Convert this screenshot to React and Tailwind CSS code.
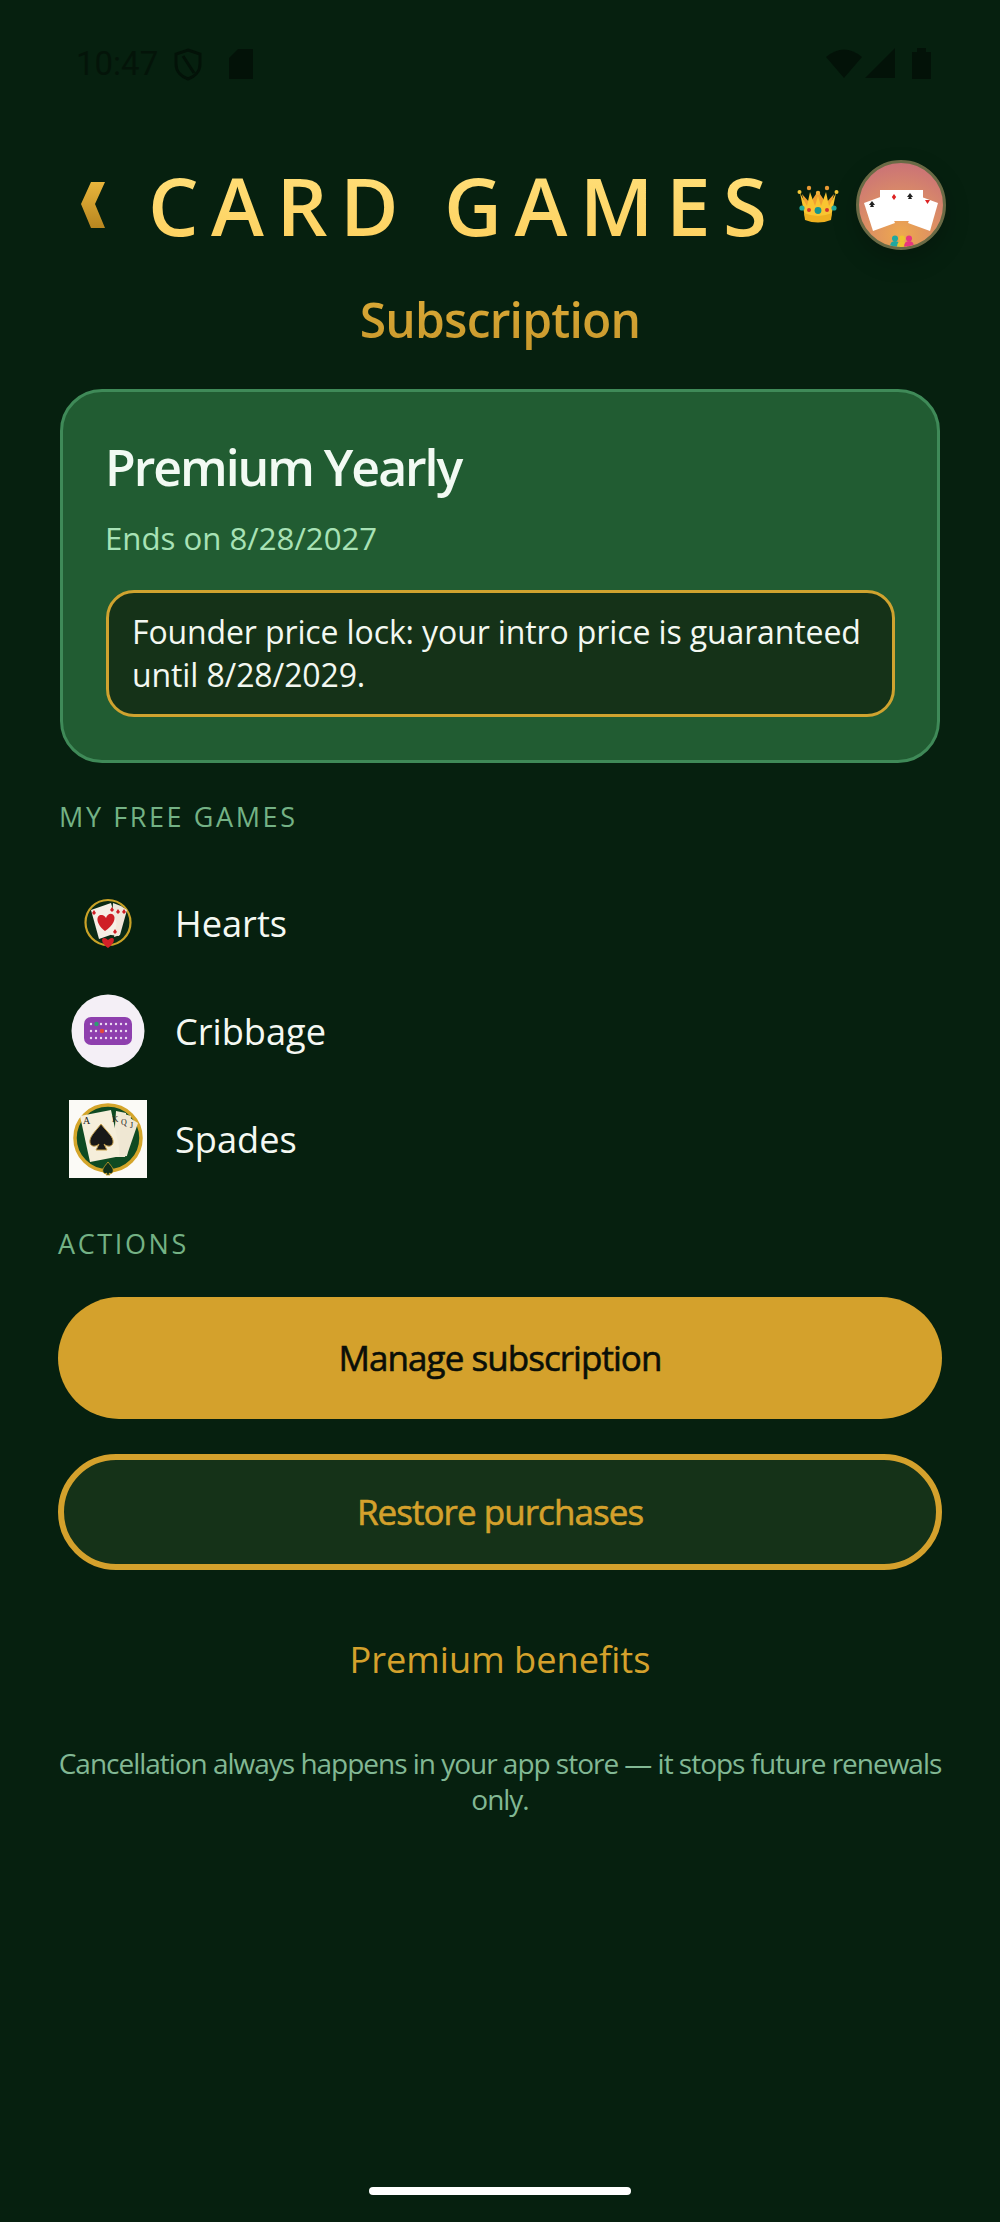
import React from "react";

function Chevron() {
  return (
    <svg width="26" height="48" viewBox="0 0 26 48" className="block shrink-0">
      <defs>
        <linearGradient id="chev" x1="0" y1="0" x2="0" y2="1">
          <stop offset="0" stopColor="#e8b53c" />
          <stop offset="1" stopColor="#b8861f" />
        </linearGradient>
      </defs>
      <polygon points="25,1 11,1 1,23 11,47 25,47 15,23" fill="url(#chev)" />
    </svg>
  );
}

function Crown() {
  return (
    <svg width="42" height="42" viewBox="0 0 42 42" className="block shrink-0">
      <path d="M5 10 L10 30 H32 L37 10 L29 19 L21 7 L13 19 Z" fill="#f0a030" />
      <path d="M3 9 L8 33 Q21 38 34 33 L39 9 L32 22 L29 8 L24 22 L21 12 L18 22 L13 8 L10 22 Z" fill="#f9c531" />
      <path d="M7 29 Q21 35 35 29 L34 36 Q21 41 8 36 Z" fill="#eeb020" />
      <circle cx="2.5" cy="8" r="2" fill="#f5c838" />
      <circle cx="12" cy="4" r="2.2" fill="#e99a35" />
      <circle cx="21" cy="9" r="2.2" fill="#f2b13a" />
      <circle cx="30" cy="4" r="2.2" fill="#e99a35" />
      <circle cx="39.5" cy="8" r="2" fill="#f5c838" />
      <circle cx="5" cy="24" r="2.6" fill="#23a79b" />
      <circle cx="12" cy="26" r="2" fill="#d6352d" />
      <circle cx="21" cy="26.5" r="3.4" fill="#14958f" />
      <circle cx="30" cy="26" r="2" fill="#d6352d" />
      <circle cx="37" cy="24" r="2.6" fill="#23a79b" />
    </svg>
  );
}

function Avatar() {
  return (
    <div className="w-[90px] h-[90px] shrink-0 rounded-full border-[3px] border-[#6a6a45] overflow-hidden shadow-[0_10px_24px_rgba(0,0,0,0.22)] bg-[radial-gradient(circle_at_50%_85%,#eea84e_0%,#d98a68_50%,#c56a7c_100%)]">
      <svg width="84" height="84" viewBox="0 0 84 84" className="block">
        <polygon points="5,40 24,33 36,60 14,68" fill="#fff" />
        <polygon points="79,40 60,33 49,60 71,68" fill="#fff" />
        <polygon points="21,27 64,27 64,58 21,58" fill="#fff" />
        <path d="M13 38 l3 4 h-2 l1 2 h-4 l1 -2 h-2 z" fill="#222" />
        <path d="M35 31 l2.200 3 l-2.200 3 l-2.200 -3 z" fill="#d22" />
        <path d="M51 30 l3 4 h-2 l1 2 h-4 l1 -2 h-2 z" fill="#222" />
        <path d="M66 37 h5 l-2.500 4 z" fill="#d22" />
        <circle cx="36" cy="75.500" r="3" fill="#1fa8a0" />
        <path d="M31 84 Q31 78 36 78 Q41 78 41 84 Z" fill="#1fa8a0" />
        <circle cx="43" cy="75.500" r="3" fill="#eec22f" />
        <path d="M38 84 Q38 78 43 78 Q48 78 48 84 Z" fill="#eec22f" />
        <circle cx="50" cy="75.500" r="3" fill="#e8357f" />
        <path d="M45 84 Q45 78 50 78 Q55 78 55 84 Z" fill="#e8357f" />
      </svg>
    </div>
  );
}

function HeartsIcon() {
  return (
    <svg width="50" height="52" viewBox="0 0 50 52" className="block">
      <circle cx="25" cy="25.5" r="22.5" fill="#0a2a15" stroke="#c9a227" strokeWidth="2.2" />
      <polygon points="30,6 38,9 43,13 36,39 28,38" fill="#efe7dc" />
      <polygon points="8,13 28,6 36,35 16,42" fill="#f6efe6" />
      <path d="M37 9 L44 13 L37 38 L31 40 Z" fill="#f2e6da" />
      <path d="M22 34 C11 25 14 17 19 18 C22 18.5 23 21 23 21 C24 18 27 15.500 30 17.500 C34 21 30 29 22 34 Z" fill="#cf1f26" />
      <path d="M11 13 l2 3 l-2 2 l-2 -2 z" fill="#cf1f26" />
      <path d="M29 10 l2 3 l-2 2 l-2 -2 z M32 32 l2 3 l-2 2 l-2 -2 z" fill="#cf1f26" />
      <path d="M35 12 l2 3 l-2 2 l-2 -2 z M41 12 l2 3 l-2 2 l-2 -2 z" fill="#cf1f26" />
      <path d="M25 51 C18 46 18 41 21 41 C23 41 25 43 25 43 C25 43 27 41 29 41 C32 41 32 46 25 51 Z" fill="#d32028" />
    </svg>
  );
}

function CribbageIcon() {
  const rows = [0, 1, 2];
  const cols = [0, 1, 2, 3, 4, 5, 6, 7];
  return (
    <svg width="74" height="74" viewBox="0 0 74 74" className="block">
      <circle cx="37" cy="37" r="36.500" fill="#f4eff6" />
      <rect x="13" y="23" width="48" height="28" rx="7" fill="#8e3fae" />
      {rows.map((r) =>
        cols.map((c) => (
          <circle key={r + "-" + c} cx={20 + c * 5} cy={30 + r * 7} r="1.200" fill="#ecdcf2" />
        ))
      )}
      <circle cx="25.500" cy="30" r="2.200" fill="#2e9e72" />
      <circle cx="31" cy="37" r="2.200" fill="#e5483a" />
    </svg>
  );
}

function SpadesIcon() {
  return (
    <svg width="78" height="78" viewBox="0 0 78 78" className="block">
      <rect width="78" height="78" fill="#fbfaf6" />
      <circle cx="39" cy="38" r="33" fill="#0e4a22" stroke="#d4a52a" strokeWidth="3.500" />
      <polygon points="47,11 57,13 56,57 44,57" fill="#f1ead6" />
      <polygon points="11,16 42,10 52,56 21,62" fill="#f5eeda" />
      <polygon points="52,13 62,16 58,56 50,57" fill="#efe7d3" />
      <polygon points="61,18 69,23 58,55 53,56" fill="#efe7d3" />
      <path d="M32 24 C25 33 20 37 21 43 C22 47 27 47 30 44 L27 50 H38 L35 44 C38 47 43 47 44 43 C45 37 39 33 32 24 Z" fill="#181818" stroke="#c7a04a" strokeWidth="1" />
      <text x="14" y="24" fontSize="10" fontFamily="'Liberation Serif',serif" fill="#222">A</text>
      <text x="43" y="22" fontSize="9" fontFamily="'Liberation Serif',serif" fill="#222">K</text>
      <text x="52" y="25" fontSize="8" fontFamily="'Liberation Serif',serif" fill="#222">Q</text>
      <text x="61" y="28" fontSize="8" fontFamily="'Liberation Serif',serif" fill="#222">J</text>
      <path d="M39 62 C35 67 33 69 34 72 C35 74 37 74 38 73 L37 75 H41 L40 73 C41 74 43 74 44 72 C45 69 43 67 39 62 Z" fill="#10301a" stroke="#d4a52a" strokeWidth="0.800" />
    </svg>
  );
}

function StatusIcons() {
  const c = "#031208";
  return (
    <div className="flex items-start">
      <svg width="36" height="30" viewBox="0 0 36 30" className="block mt-[1px]">
        <path d="M0 9 Q18 -6 36 9 L18 30 Z" fill={c} />
      </svg>
      <svg width="30" height="30" viewBox="0 0 30 30" className="block ml-[3px] mt-[1px]">
        <polygon points="30,0 30,30 0,30" fill={c} />
      </svg>
      <svg width="19" height="32" viewBox="0 0 19 32" className="block ml-[17px]">
        <path d="M0 5 H5 V1 H14 V5 H19 V32 H0 Z" fill={c} />
      </svg>
    </div>
  );
}

function Row({ icon, label }) {
  return (
    <div className="h-[108px] flex items-center">
      <div className="w-[115px] shrink-0 flex justify-center pr-[19px]">{icon}</div>
      <span className="text-[36.2px] leading-[52px] text-[#f4f8f2]">{label}</span>
    </div>
  );
}

export default function App() {
  return (
    <div className="w-[1000px] h-[2222px] flex flex-col bg-[#06200f] font-['Open_Sans',sans-serif]">
      <div className="h-[160px] shrink-0 flex justify-between pl-[76px] pr-[69px] pt-[47px]">
        <div className="flex items-start">
          <span className="font-['Roboto',sans-serif] text-[33px] leading-[36px] text-[#041409] mt-[-1px]">10:47</span>
          <svg width="28" height="33" viewBox="0 0 28 33" className="block ml-[16px] mt-[1px]" fill="none" stroke="#031208" strokeWidth="3">
            <path d="M14 2 L26 6 V16 C26 24 20 29 14 31 C8 29 2 24 2 16 V6 Z" />
            <path d="M9 8 L20 25" />
          </svg>
          <svg width="24" height="30" viewBox="0 0 24 30" className="block ml-[27px] mt-[2px]">
            <path d="M9 0 H24 V30 H0 V9 Z" fill="#031208" />
          </svg>
        </div>
        <StatusIcons />
      </div>

      <div className="h-[90px] shrink-0 flex items-center pl-[80px]">
        <Chevron />
        <h1 className="ml-[42px] w-[644px] shrink-0 text-[80px] leading-[90px] font-[550] tracking-[12.4px] whitespace-nowrap bg-gradient-to-b from-[#ffe07a] to-[#fdd05e] bg-clip-text text-transparent">CARD GAMES</h1>
        <div className="ml-[5px]"><Crown /></div>
        <div className="ml-[17px]"><Avatar /></div>
      </div>

      <h2 className="mt-[37px] text-center text-[48px] leading-[66px] font-semibold tracking-[-0.8px] bg-gradient-to-b from-[#dcab38] to-[#c8982c] bg-clip-text text-transparent">Subscription</h2>

      <div className="mt-[36px] mx-[60px] rounded-[42px] border-[3px] border-[#3f8a58] bg-[#215c32] pt-[41px] pb-[43px] pl-[43px] pr-[29px]">
        <div className="-ml-[1px] text-[50px] leading-[68px] font-semibold tracking-[-2.05px] text-[#f2faf3]">Premium Yearly</div>
        <div className="mt-[15px] -ml-[1px] text-[31.2px] leading-[44px] text-[#a8e2b6]">Ends on 8/28/2027</div>
        <div className="mt-[30px] mr-[13px] rounded-[28px] border-[3px] border-[#cfa32f] bg-[#153218] pt-[17px] pb-[18px] pl-[23px] pr-[20px] text-[32px] leading-[43px] tracking-[-0.12px] text-[#f3f8f1]">
          Founder price lock: your intro price is guaranteed until 8/28/2029.
        </div>
      </div>

      <div className="mt-[36px] ml-[59px] text-[27px] leading-[36px] tracking-[2.6px] font-medium text-[#74b285]">MY FREE GAMES</div>
      <div className="mt-[34px] ml-[60px]">
        <Row icon={<HeartsIcon />} label="Hearts" />
        <Row icon={<CribbageIcon />} label="Cribbage" />
        <Row icon={<SpadesIcon />} label="Spades" />
      </div>

      <div className="mt-[33px] ml-[58px] text-[27px] leading-[36px] tracking-[2.6px] font-medium text-[#74b285]">ACTIONS</div>
      <div className="mt-[35px] mx-[58px] h-[122px] rounded-full bg-[#d4a12c] flex items-center justify-center text-[35px] tracking-[-0.95px] [-webkit-text-stroke:0.6px_#0a0f08] text-[#0a0f08]">Manage subscription</div>
      <div className="mt-[35px] mx-[58px] h-[116px] rounded-full border-[6px] border-[#d4a12c] bg-[#153218] flex items-center justify-center text-[35px] tracking-[-0.95px] [-webkit-text-stroke:0.6px_#d4a12c] text-[#d4a12c]">Restore purchases</div>

      <div className="mt-[64px] text-center text-[36.2px] leading-[50px] text-[#d4a12c]">Premium benefits</div>
      <div className="mt-[61px] mx-[56px] text-center text-[28px] leading-[36px] tracking-[-1.02px] text-[#82b894]">Cancellation always happens in your app store — it stops future renewals only.</div>

      <div className="mt-auto mb-[27px] mx-auto w-[262px] h-[8px] rounded-full bg-white"></div>
    </div>
  );
}
